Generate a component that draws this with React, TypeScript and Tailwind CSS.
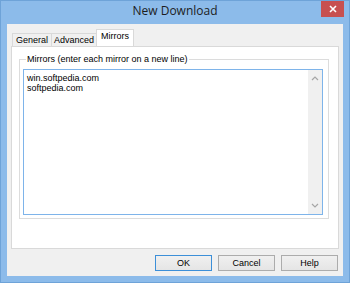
import { useState } from "react";

const ui = { fontFamily: '"Liberation Sans", Arial, sans-serif' };

const Tab = ({ label, width, active, onClick }: { label: string; width: string; active: boolean; onClick: () => void }) => {
    return (
        <button
            onClick={onClick}
            className={
                active
                    ? `relative z-10 -mb-px h-[17px] border border-b-0 border-[#d9d9d9] bg-white pb-[3px] text-[9px] leading-none text-black ${width}`
                    : `h-[13px] self-end border border-b-0 border-r-0 border-[#d9d9d9] bg-[#f0f0f0] text-[9px] leading-none text-black last-of-type:border-r ${width}`
            }
        >
            {label}
        </button>
    );
};

const DlgButton = ({ label, primary }: { label: string; primary?: boolean }) => {
    return (
        <button
            className={
                "h-[16px] w-[57px] border bg-gradient-to-b from-[#f0f0f0] to-[#e5e5e5] text-[9px] leading-none text-black " +
                (primary ? "border-[#3c8fd8]" : "border-[#acacac]")
            }
        >
            {label}
        </button>
    );
};

export default function App() {
    const [tab, setTab] = useState("Mirrors");
    const tabs = [
        { label: "General", width: "w-[39px]" },
        { label: "Advanced", width: "w-[45px]" },
        { label: "Mirrors", width: "w-[38px]" },
    ];

    return (
        <div className="flex h-[283px] w-[350px] flex-col border border-[#6ea3d8] bg-[#8cbbea]" style={ui}>
            {/* title bar */}
            <div className="grid h-[23px] grid-cols-[1fr_auto_1fr] items-start">
                <div />
                <p className="pt-[4px] text-[12px] leading-none text-[#1d1d1d]" style={{ fontFamily: '"Open Sans", "Noto Sans", sans-serif' }}>
                    New Download
                </p>
                <div className="flex justify-end pr-[5px]">
                    <button className="flex h-[16px] w-[23px] items-center justify-center bg-[#c75050] text-white">
                        <svg width="8" height="8" viewBox="0 0 8 8">
                            <path d="M1 1 L7 7 M7 1 L1 7" stroke="white" strokeWidth="1.6" />
                        </svg>
                    </button>
                </div>
            </div>

            {/* client */}
            <div className="mx-[6px] mb-[6px] flex flex-1 flex-col bg-[#f0f0f0] px-[4px] pt-[5px]">
                <div className="flex h-[17px] pl-[1px]">
                    {tabs.map((t) => (
                        <Tab key={t.label} label={t.label} width={t.width} active={tab === t.label} onClick={() => setTab(t.label)} />
                    ))}
                </div>
                <div className="h-[203px] border border-[#d9d9d9] bg-white px-[7px] pt-[7px]">
                    <fieldset className="mr-[2px] h-[165px] border border-[#dcdcdc] px-[3px]">
                        <legend className="ml-[3px] px-[1px] text-[9px] leading-[11px] text-black">
                            Mirrors (enter each mirror on a new line)
                        </legend>
                        <div className="mt-[4px] mr-[2px] flex h-[146px] border border-[#7eb4ea] bg-white">
                            <div className="flex-1 pl-[3px] pt-[3px] text-[9px] leading-[10px] text-black">
                                <p>win.softpedia.com</p>
                                <p>softpedia.com</p>
                            </div>
                            <div className="flex w-[14px] flex-col justify-between bg-[#f0f0f0] py-[5px]">
                                <svg width="14" height="6" viewBox="0 0 14 6">
                                    <path d="M4 5 L7 2 L10 5" fill="none" stroke="#a6a6a6" strokeWidth="1.2" />
                                </svg>
                                <svg width="14" height="6" viewBox="0 0 14 6">
                                    <path d="M4 1 L7 4 L10 1" fill="none" stroke="#a6a6a6" strokeWidth="1.2" />
                                </svg>
                            </div>
                        </div>
                    </fieldset>
                </div>
                <div className="mt-[6px] flex justify-end gap-[6px] pr-[1px]">
                    <DlgButton label="OK" primary />
                    <DlgButton label="Cancel" />
                    <DlgButton label="Help" />
                </div>
            </div>
        </div>
    );
}
